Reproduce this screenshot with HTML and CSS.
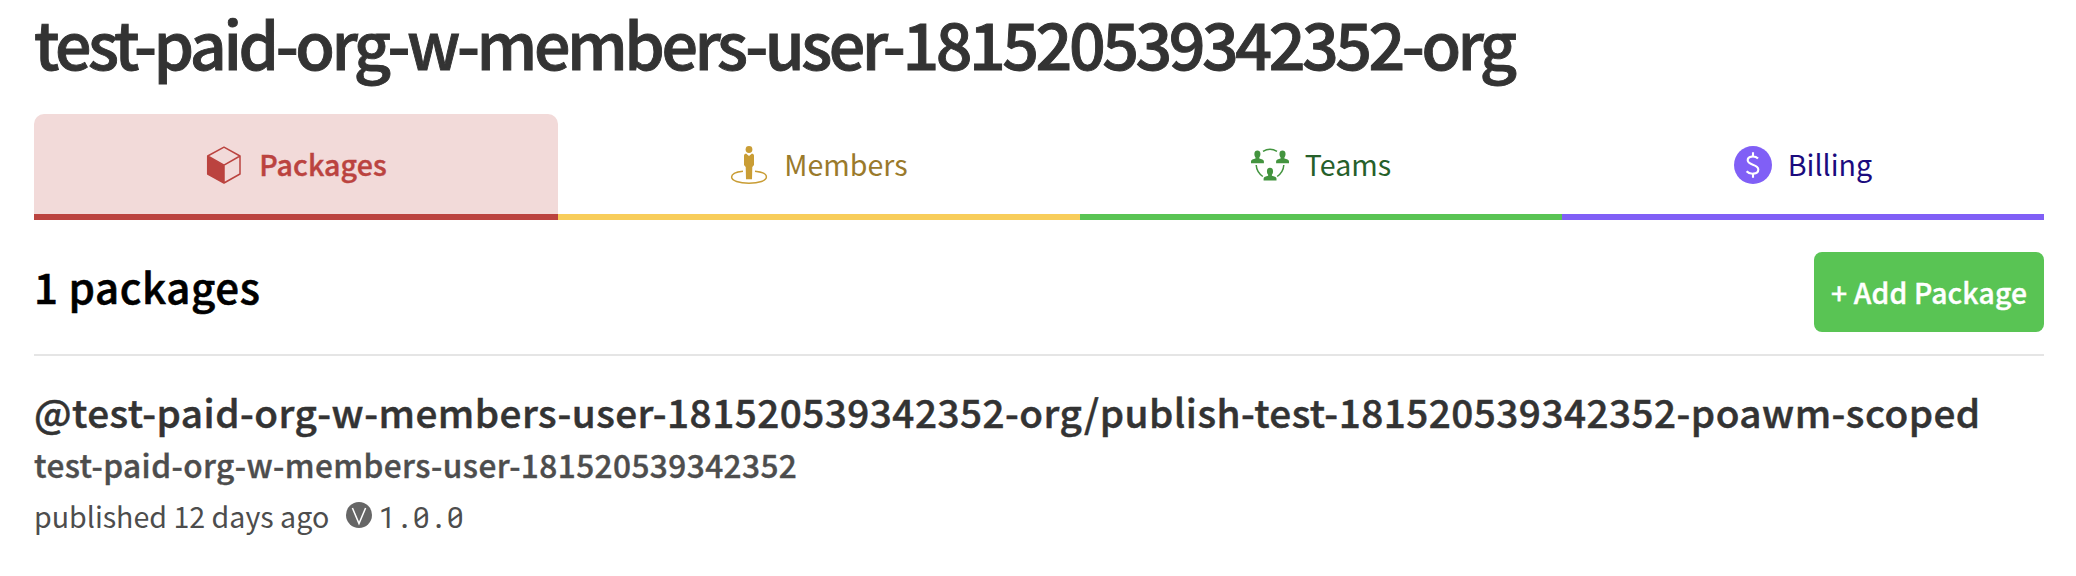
FILE: index.html
```html
<!DOCTYPE html>
<html lang="en">
<head>
<meta charset="utf-8">
<title>Organization packages</title>
<link rel="stylesheet" href="styles.css">
</head>
<body>
<main class="page">
  <h1 class="org-name">test-paid-org-w-members-user-181520539342352-org</h1>

  <nav class="tabs">
    <a class="tab tab-packages">
      <svg class="icon" viewBox="0 0 38 38"><path d="M2.7 10L19 19.4V37L2.7 28Z" fill="#bb433f"/><path d="M19 1.2L35 10V28L19 37L2.7 28V10ZM2.7 10L19 19.2L35 10M19 19.2V37" fill="none" stroke="#bb433f" stroke-width="1.5" stroke-linejoin="round"/></svg>
      <span class="tab-label">Packages</span>
    </a>
    <a class="tab tab-members">
      <svg class="icon" viewBox="0 0 38 38"><circle cx="19" cy="3.5" r="3.4" fill="#c99d35"/><path d="M16 7.4L19 10L22 7.4Q24 7.6 24 9.5V19L22.3 21L22 33.2H16L15.7 21L14 19V9.5Q14 7.6 16 7.4Z" fill="#c99d35"/><path d="M13 25.2C5 26 1.6 28.5 1.6 31C1.6 34.6 9 37.2 19 37.2S36.4 34.6 36.4 31C36.4 28.5 33 26 25 25.2" fill="none" stroke="#c99d35" stroke-width="1.5"/></svg>
      <span class="tab-label">Members</span>
    </a>
    <a class="tab tab-teams">
      <svg class="icon" viewBox="0 0 38 38"><g fill="#43943f"><path id="person" d="M3.4 5.5C3.4 3.7 4.6 2.5 6.4 2.5S9.4 3.7 9.4 5.5C9.6 7.3 9 8.6 8.3 9.4V10.4C10.5 11 12.9 11.5 12.9 13.2V15.2H0V13.2C0 11.5 2.3 11 4.5 10.4V9.4C3.8 8.6 3.2 7.3 3.4 5.5Z" transform="translate(0 2)"/><use href="#person" x="25.1"/><use href="#person" x="12.6" y="17.3"/></g><path d="M12 5.3Q19 1.2 26 5.3M5.2 19Q5.6 26 11.8 30.5M32.8 19Q32.4 26 26.2 30.5" fill="none" stroke="#43943f" stroke-width="1.5"/></svg>
      <span class="tab-label">Teams</span>
    </a>
    <a class="tab tab-billing">
      <svg class="icon" viewBox="0 0 38 38"><circle cx="19" cy="19" r="19" fill="#805ff6"/><path d="M24 12.5C21.5 9.8 13.7 9.5 13.7 14.3C13.7 19.5 24.3 17.8 24.3 23.5C24.3 28.7 15.5 28.7 12.6 25.3M19 6.3V10.5M19 27.5V31.7" fill="none" stroke="#fff" stroke-width="2.1"/></svg>
      <span class="tab-label">Billing</span>
    </a>
  </nav>

  <header class="list-header">
    <h2 class="count">1 packages</h2>
    <button class="add">+ Add Package</button>
  </header>

  <article class="package">
    <h3 class="package-name">@test-paid-org-w-members-user-181520539342352-org/publish-test-181520539342352-poawm-scoped</h3>
    <p class="publisher">test-paid-org-w-members-user-181520539342352</p>
    <p class="release">
      <span class="date">published 12 days ago</span>
      <svg class="version-icon" viewBox="0 0 26 26"><circle cx="13" cy="13" r="13" fill="#666"/><path d="M6.4 6L13 21.5L19.6 6" fill="none" stroke="#fff" stroke-width="1.5"/></svg>
      <span class="version">1.0.0</span>
    </p>
  </article>
</main>
</body>
</html>
```

FILE: styles.css
```css
* { box-sizing: border-box; }
body {
  margin: 0;
  background: #fff;
  color: #333;
  font-family: "Noto Sans CJK SC", "Noto Sans", sans-serif;
}
h1, h2, h3, p { margin: 0; font-weight: 500; white-space: nowrap; }
.page { padding: 0 32px 0 34px; }
.org-name { height: 114px; font-size: 64.5px; line-height: 84px; letter-spacing: -3.47px; -webkit-text-stroke: 0.9px; }
.tabs { display: grid; grid-template-columns: 524px 522px 482px 482px; height: 106px; }
.tab {
  display: flex;
  align-items: center;
  justify-content: center;
  gap: 16px;
  padding-top: 2px;
  border-bottom: 6px solid;
  font-size: 28.6px;
}
.tab-label { padding-bottom: 3px; }
.icon { width: 38px; height: 38px; flex: none; }
.tab-packages { background: #f2dad9; border-color: #bb433f; border-radius: 10px 10px 0 0; color: #bb433f; font-weight: 500; letter-spacing: 0.08px; -webkit-text-stroke: 0.4px; }
.tab-members { border-color: #f8cd5a; color: #9a7a2b; }
.tab-teams { border-color: #59c454; color: #26602a; }
.tab-billing { border-color: #805ff6; color: #1b0b7e; }
.list-header {
  display: flex;
  align-items: flex-start;
  justify-content: space-between;
  height: 136px;
  padding-top: 32px;
  border-bottom: 2px solid #e5e5e5;
}
.count { color: #000; font-size: 42px; line-height: 68px; letter-spacing: 0.6px; -webkit-text-stroke: 0.6px; }
.add {
  width: 230px; height: 80px; padding: 0 0 1px;
  border: 0; border-radius: 8px;
  background: #59c454; color: #fff;
  font: 500 28.3px "Noto Sans CJK SC", sans-serif;
  letter-spacing: 0.15px;
  -webkit-text-stroke: 0.4px;
}
.package { padding-top: 27px; }
.package-name { font-size: 38.7px; line-height: 56px; letter-spacing: 0.475px; -webkit-text-stroke: 0.5px; }
.publisher { color: #4d4d4d; font-size: 31.6px; line-height: 50px; letter-spacing: 0.42px; -webkit-text-stroke: 0.4px; }
.release { display: flex; align-items: flex-start; color: #4d4d4d; font-size: 28.6px; font-weight: 400; line-height: 50px; }
.date { padding-top: 2px; }
.version-icon { width: 26px; height: 26px; margin: 13px 6.5px 0 16.8px; }
.version { padding-top: 3px; font-family: "Roboto Mono", "DejaVu Sans Mono", monospace; font-size: 29px; letter-spacing: -0.4px; }
```
